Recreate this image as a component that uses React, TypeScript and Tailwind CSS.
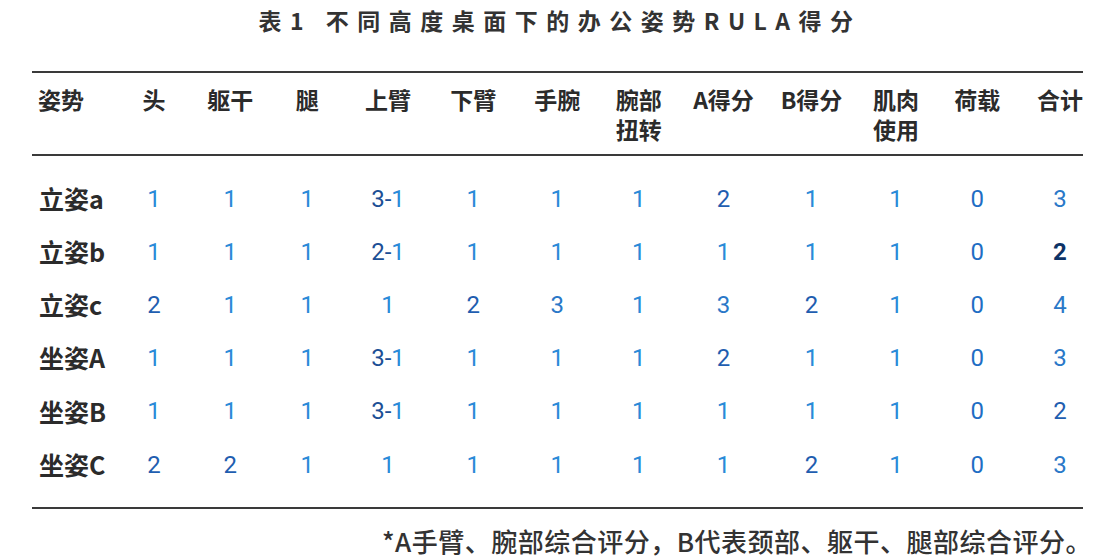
const cols = 'grid grid-cols-[84px_76px_76.5px_77.5px_84px_86.5px_81.5px_81.5px_88px_88px_81px_81.5px_84px]';

const headers: string[][] = [
  ['姿势'],
  ['头'],
  ['躯干'],
  ['腿'],
  ['上臂'],
  ['下臂'],
  ['手腕'],
  ['腕部', '扭转'],
  ['A得分'],
  ['B得分'],
  ['肌肉', '使用'],
  ['荷载'],
  ['合计'],
];

const rows: { label: string; vals: string[] }[] = [
  { label: '立姿a', vals: ['1', '1', '1', '3-1', '1', '1', '1', '2', '1', '1', '0', '3'] },
  { label: '立姿b', vals: ['1', '1', '1', '2-1', '1', '1', '1', '1', '1', '1', '0', '2!'] },
  { label: '立姿c', vals: ['2', '1', '1', '1', '2', '3', '1', '3', '2', '1', '0', '4'] },
  { label: '坐姿A', vals: ['1', '1', '1', '3-1', '1', '1', '1', '2', '1', '1', '0', '3'] },
  { label: '坐姿B', vals: ['1', '1', '1', '3-1', '1', '1', '1', '1', '1', '1', '0', '2'] },
  { label: '坐姿C', vals: ['2', '2', '1', '1', '1', '1', '1', '1', '2', '1', '0', '3'] },
];

function Num({ v }: { v: string }) {
  if (v === '2!') return <span className="font-bold text-[#0d3366]">2</span>;
  if (v.includes('-')) {
    const [a, b] = v.split('-');
    return (
      <span>
        <span className="text-[#1c4f95]">{a}-</span>
        <span className="text-[#2a8ad8]">{b}</span>
      </span>
    );
  }
  const color =
    v === '1' ? 'text-[#2a8ad8]' : v === '2' ? 'text-[#1f5eb0]' : v === '0' ? 'text-[#1f6ec4]' : 'text-[#2a78c8]';
  return <span className={color}>{v}</span>;
}

export default function App() {
  return (
    <div className="h-[560px] w-[1120px] overflow-hidden bg-white font-['Noto_Sans_CJK_SC',sans-serif] text-[#2b2b2b]">
      <h1 className="pt-[4px] text-center text-[23px] font-bold leading-[32px] tracking-[8.5px] text-[#333]">
        表1 不同高度桌面下的办公姿势RULA得分
      </h1>

      <div className="ml-[32px] mt-[35px] w-[1051px] border-y-2 border-[#3a3a3a]">
        <div className={`${cols} border-b-2 border-[#3a3a3a] pb-[10px] pt-[11px] text-[23px] font-bold leading-[30px]`}>
          {headers.map((h, i) => (
            <div key={i} className={i === 0 ? 'pl-[6px] text-left' : 'text-center'}>
              {h.map((l) => (
                <div key={l}>{l}</div>
              ))}
            </div>
          ))}
        </div>

        <div className="pb-[16px] pt-[16px]">
          {rows.map((r) => (
            <div key={r.label} className={`${cols} h-[53.2px] items-center`}>
              <div className="pl-[7px] text-[25px] font-bold">{r.label}</div>
              {r.vals.map((v, i) => (
                <div key={i} className="text-center font-['Roboto',sans-serif] text-[24px]">
                  <Num v={v} />
                </div>
              ))}
            </div>
          ))}
        </div>
      </div>

      <p className="mt-[17px] pr-[28px] text-right text-[26px] font-medium leading-[30px] tracking-[0.5px] text-[#333]">
        *A手臂、腕部综合评分，B代表颈部、躯干、腿部综合评分。
      </p>
    </div>
  );
}
